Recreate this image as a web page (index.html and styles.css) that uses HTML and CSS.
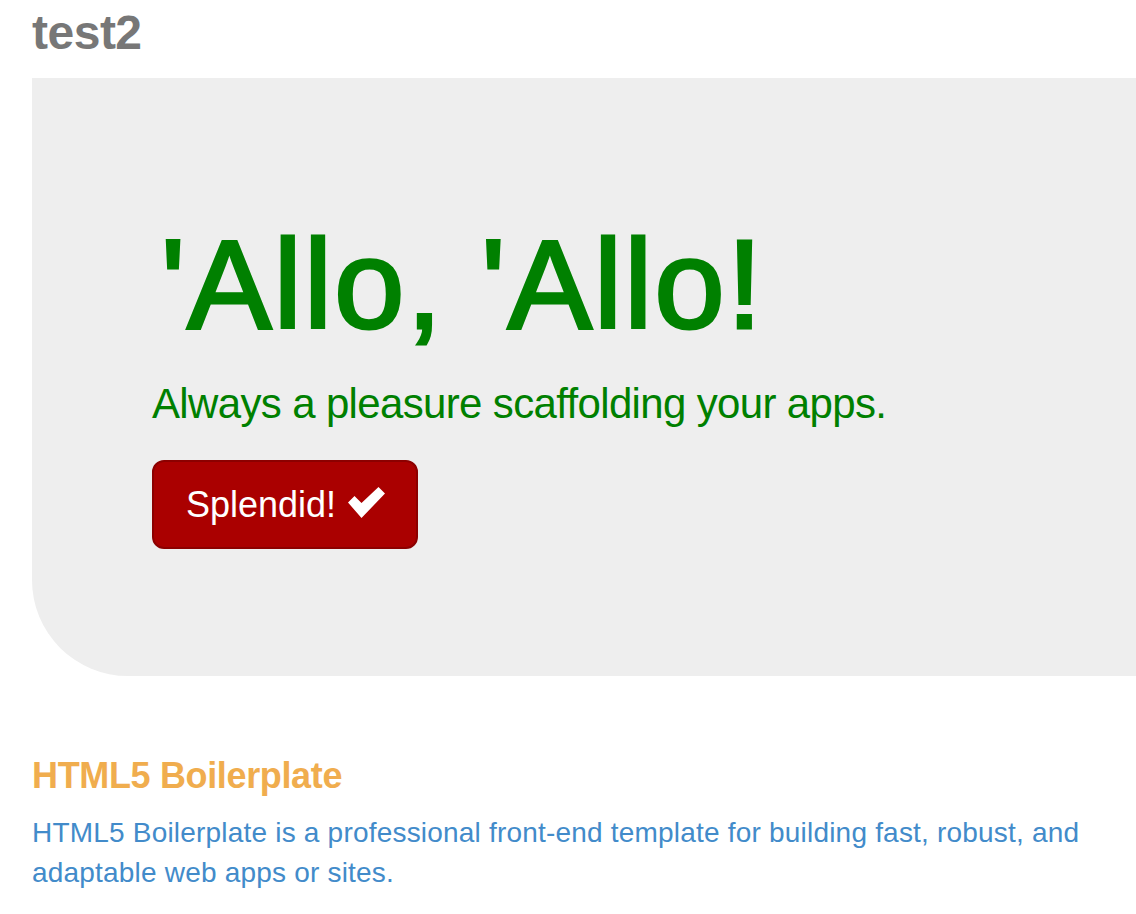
FILE: index.html
```html
<!DOCTYPE html>
<html>
<head>
<meta charset="utf-8">
<title>test2</title>
<link rel="stylesheet" href="styles.css">
</head>
<body>
<div class="page">
  <div class="header">
    <h3 class="title">test2</h3>
  </div>
  <div class="jumbotron">
    <h1 class="hero">'Allo, 'Allo!</h1>
    <p class="lead">Always a pleasure scaffolding your apps.</p>
    <p class="actions"><a class="btn" href="#">Splendid! <svg class="check" viewBox="0 0 37 31" width="37" height="31"><polygon points="0,15.5 6.5,9 13.5,16 30.5,0 37,6.5 13.5,31" fill="#fff"/></svg></a></p>
  </div>
  <div class="marketing">
    <h4 class="sub">HTML5 Boilerplate</h4>
    <p class="desc">HTML5 Boilerplate is a professional front-end template for building fast, robust, and adaptable web apps or sites.</p>
  </div>
</div>
</body>
</html>
```
FILE: styles.css
```css
html, body {
  margin: 0;
  padding: 0;
  background: #fff;
}
body {
  font-family: "Liberation Sans", Arial, Helvetica, sans-serif;
}
.page {
  padding-left: 32px;
}
.header {
  height: 78px;
  box-sizing: border-box;
  padding-top: 9px;
}
.title {
  margin: 0;
  font-size: 48px;
  line-height: 48px;
  font-weight: bold;
  color: #777;
  letter-spacing: -0.5px;
}
.jumbotron {
  background: #eee;
  border-bottom-left-radius: 96px;
  padding: 138px 0 127px 120px;
}
.hero {
  margin: 0 0 19px 0;
  font-size: 126px;
  line-height: 1.1;
  font-weight: normal;
  color: #008000;
  letter-spacing: 2.3px;
  text-indent: 9px;
  -webkit-text-stroke: 3.2px #008000;
}
.lead {
  margin: 0 0 26px 0;
  font-size: 42px;
  line-height: 60px;
  font-weight: normal;
  color: #008000;
  letter-spacing: -0.65px;
}
.actions {
  margin: 0;
  display: flex;
}
.btn {
  display: inline-flex;
  align-items: center;
  background: #aa0000;
  border: 2px solid #8c0000;
  border-radius: 12px;
  padding: 19px 31px 19px 32px;
  font-size: 36px;
  line-height: 47px;
  color: #fff;
  text-decoration: none;
  white-space: pre;
}
.check {
  display: block;
  margin-left: 2px;
  margin-top: -4px;
}
.marketing {
  padding-top: 80px;
}
.sub {
  margin: 0 0 18px 0;
  font-size: 36px;
  line-height: 1.1;
  font-weight: bold;
  color: #f0ad4e;
  letter-spacing: -0.35px;
}
.desc {
  margin: 0;
  font-size: 28px;
  line-height: 40px;
  color: #428bca;
  letter-spacing: 0.2px;
}
```
